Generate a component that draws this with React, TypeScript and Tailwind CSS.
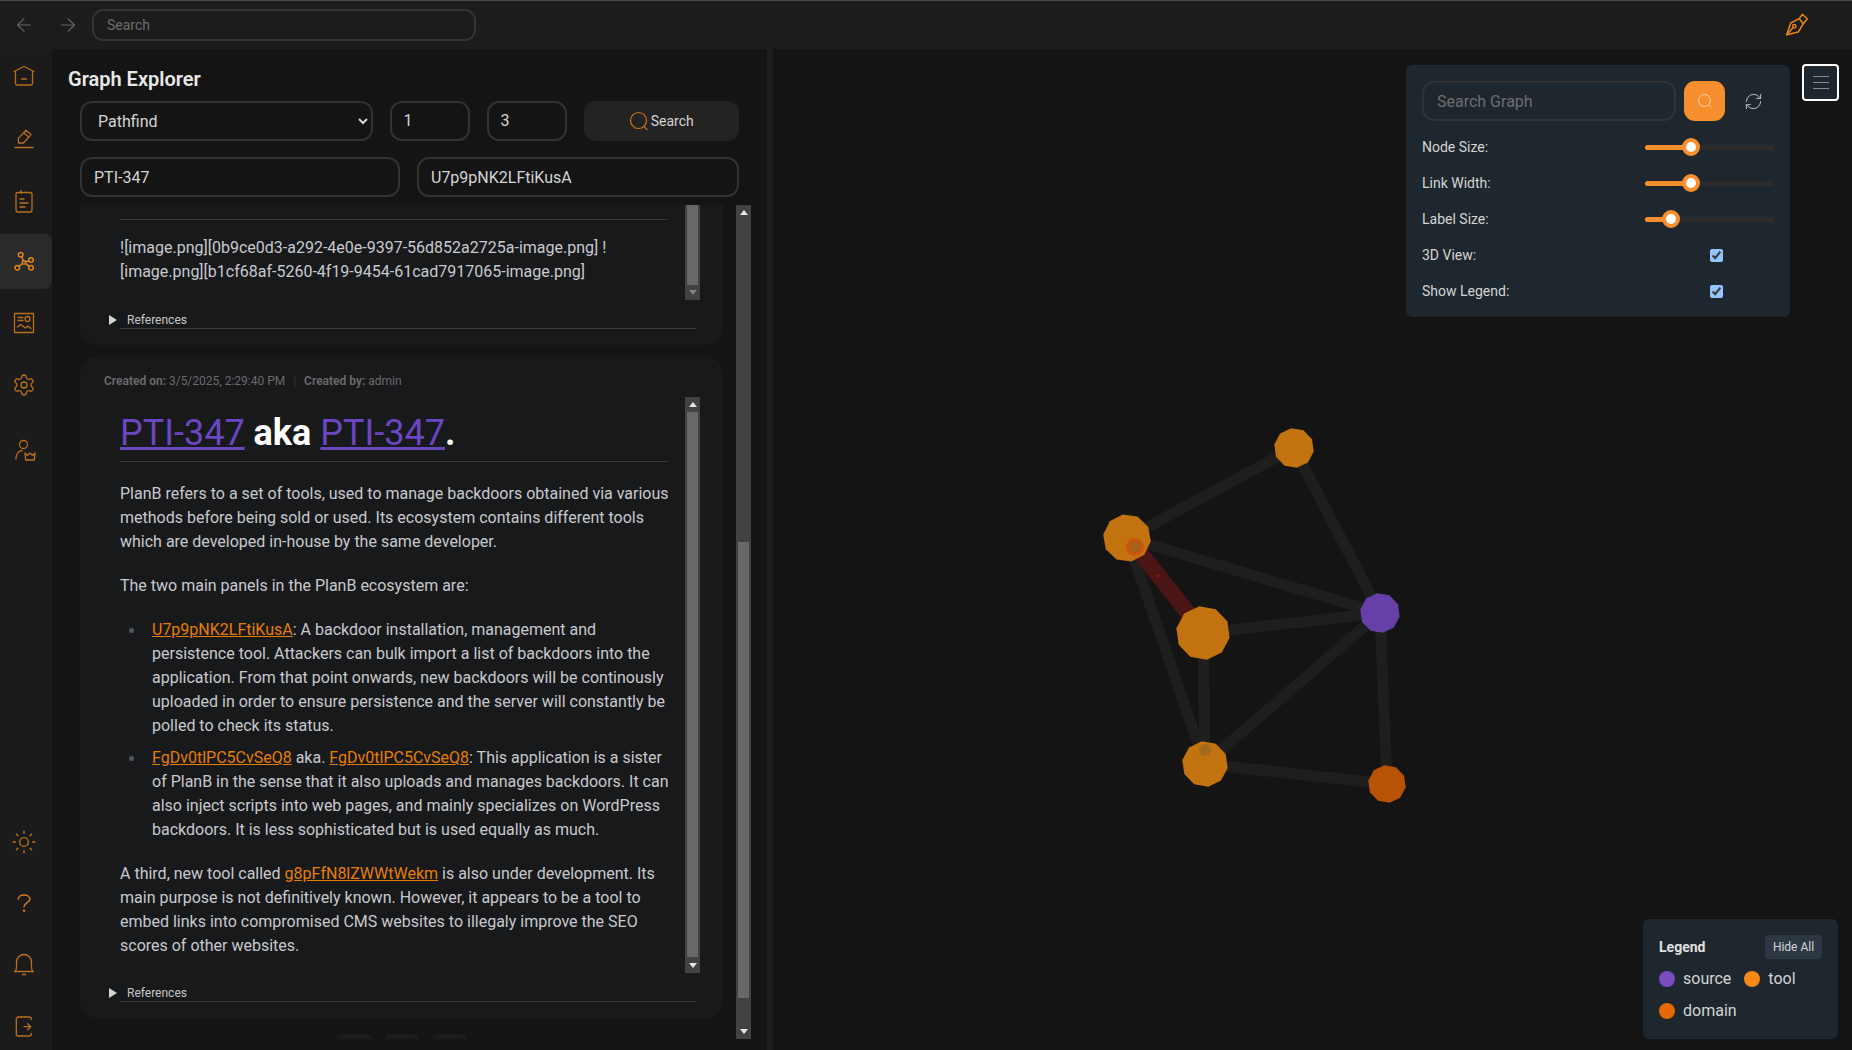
import React from "react";
import { ArrowLeft, ArrowRight, Settings, Sun, RefreshCw } from "lucide-react";

const ic = "#b96f1d";

function Svg({ children, size = 24, color = ic, sw = 1.3 }: { children: React.ReactNode; size?: number; color?: string; sw?: number }) {
  return (
    <svg width={size} height={size} viewBox="0 0 24 24" fill="none" stroke={color} strokeWidth={sw} strokeLinecap="round" strokeLinejoin="round">
      {children}
    </svg>
  );
}

function SideItem({ children, active, h = "h-[54.750px]", extra = "" }: { children: React.ReactNode; active?: boolean; h?: string; extra?: string }) {
  return (
    <div className={`w-[52px] ${h} ${extra} pr-[4px] flex items-center justify-center rounded-r-[8px] ${active ? "bg-[#2a2a2a]" : ""}`}>{children}</div>
  );
}

function Tri({ up }: { up?: boolean }) {
  return (
    <svg width="8" height="5" viewBox="0 0 8 5" fill="#e5e5e5">
      <path d={up ? "M4 0L8 5H0Z" : "M0 0H8L4 5Z"} />
    </svg>
  );
}

function Scrollbar({ top, thumb, hideUp, dimDown }: { top: number; thumb: number; hideUp?: boolean; dimDown?: boolean }) {
  return (
    <div className="w-[15px] shrink-0 bg-[#424242] flex flex-col items-center self-stretch">
      {hideUp ? null : (
        <div className="h-[15px] w-full flex items-center justify-center shrink-0">
          <Tri up />
        </div>
      )}
      <div className="w-[11px] bg-[#686868] shrink-0" style={{ marginTop: top, height: thumb }} />
      <div className="flex-1" />
      <div className={`h-[15px] w-full flex items-center justify-center shrink-0 ${dimDown ? "opacity-40" : ""}`}>
        <Tri />
      </div>
    </div>
  );
}

function References() {
  return (
    <div className="mt-[12px] relative h-[17px] border-b border-[#3a3a3a] ml-[16px] mr-[4px]">
      <div className="absolute left-[-11px] top-[3px] w-0 h-0 border-y-[5px] border-y-transparent border-l-[8px] border-l-[#d4d4d4]" />
      <span className="absolute left-[7px] top-0 text-[12px] leading-[16px] text-[#c8c8c8]">References</span>
    </div>
  );
}

function A({ children }: { children: React.ReactNode }) {
  return <a className="text-[#e67e00] underline">{children}</a>;
}

const nodes = [
  { x: 1294, y: 448, r: 20, c: "#c2730f", rot: 10 },
  { x: 1127, y: 538, r: 24, c: "#c2730f", rot: 8 },
  { x: 1203, y: 633, r: 27, c: "#c2730f", rot: 10 },
  { x: 1380, y: 613, r: 20, c: "#673fa8", rot: 10 },
  { x: 1205, y: 764, r: 23, c: "#c2730f", rot: 10 },
  { x: 1387, y: 784, r: 19, c: "#b85205", rot: 10 },
];
const links = [
  [0, 1],
  [0, 3],
  [1, 3],
  [2, 3],
  [1, 4],
  [2, 4],
  [3, 4],
  [3, 5],
  [4, 5],
];

function oct(x: number, y: number, r: number, rot: number) {
  const pts: string[] = [];
  for (let i = 0; i < 10; i++) {
    const a = ((i * 36 + rot) * Math.PI) / 180;
    pts.push(`${(x + r * Math.cos(a)).toFixed(1)},${(y + r * Math.sin(a)).toFixed(1)}`);
  }
  return pts.join(" ");
}

function Graph() {
  const ox = 773;
  const oy = 49;
  return (
    <svg className="absolute left-0 top-0" width="1079" height="1001" viewBox={`${ox} ${oy} 1079 1001`}>
      {links.map(([a, b], i) => (
        <line key={i} x1={nodes[a].x} y1={nodes[a].y} x2={nodes[b].x} y2={nodes[b].y} stroke="#1e1e1e" strokeWidth="11" />
      ))}
      <line x1={1135} y1={546} x2={1200} y2={628} stroke="#4c1515" strokeWidth="16" />
      {nodes.map((n, i) => (
        <polygon key={i} points={oct(n.x, n.y, n.r, n.rot)} fill={n.c} />
      ))}
      <circle cx={1135} cy={547} r={9} fill="#cf5410" />
      <circle cx={1135} cy={547} r={6} fill="#a8601a" />
      <circle cx={1205} cy={750} r={6} fill="#a56a20" />
      <circle cx={1158} cy={576} r={1} fill="#d01010" />
    </svg>
  );
}

function Slider({ label, pct }: { label: string; pct: number }) {
  return (
    <div className="h-[36px] flex items-center justify-between">
      <span className="text-[14px] text-[#d4d4d4]">{label}</span>
      <div className="relative w-[129px] h-[5px] bg-[#2c2c2c] rounded-full">
        <div className="absolute left-0 top-0 h-[5px] bg-[#f78f2e] rounded-l-full" style={{ width: `${pct}%` }} />
        <div
          className="absolute top-[-7px] w-[18px] h-[18px] -ml-[9px] rounded-full bg-white border-[4px] border-[#f78f2e]"
          style={{ left: `${pct}%` }}
        />
      </div>
    </div>
  );
}

function Check({ label }: { label: string }) {
  return (
    <div className="h-[36px] flex items-center">
      <span className="text-[14px] text-[#d4d4d4] w-[288px]">{label}</span>
      <input type="checkbox" defaultChecked className="w-[13px] h-[13px] [color-scheme:dark] accent-[#93c5fd]" />
    </div>
  );
}

function Dot({ c, label }: { c: string; label: string }) {
  return (
    <div className="flex items-center gap-[8px]">
      <span className="w-[16px] h-[16px] rounded-full" style={{ background: c }} />
      <span className="text-[16px] leading-[24px] text-[#d4d4d4]">{label}</span>
    </div>
  );
}

const inputCls = "bg-transparent border-2 border-[#323232] rounded-[12px] text-[#d4d4d4] text-[16px] outline-none";
const liCls =
  "relative before:content-[''] before:absolute before:left-[-23px] before:top-[10px] before:w-[5px] before:h-[5px] before:rounded-full before:bg-[#4b5563]";

export default function App() {
  return (
    <div className="w-[1852px] h-[1050px] overflow-hidden bg-[#141414] flex flex-col text-[#d4d4d4] font-['Roboto',sans-serif]">
      <header className="h-[49px] shrink-0 bg-[#1c1c1c] border-t border-[#4a4a4a] flex items-center">
        <div className="w-[92px] flex items-center pl-[13px] gap-[22px] shrink-0">
          <ArrowLeft size={22} color="#666666" strokeWidth={1.2} />
          <ArrowRight size={22} color="#666666" strokeWidth={1.2} />
        </div>
        <input
          placeholder="Search"
          className="w-[384px] h-[32px] px-[13px] bg-transparent border-2 border-[#333333] rounded-[11px] text-[14px] outline-none placeholder:text-[#6e6e6e]"
        />
        <div className="flex-1" />
        <div className="mr-[43px]">
          <Svg color="#e8851a" sw={1.5}>
            <path d="M1.700 21.700L5.700 10L14.300 5.700L18.300 10.700L13.300 19Z" />
            <path d="M14.300 5.700L17.300 1.300L22.300 5.700L18.300 10.700" />
            <circle cx="9.300" cy="13.300" r="1.700" />
            <path d="M1.700 21.700L8.100 14.500" />
          </Svg>
        </div>
      </header>
      <div className="flex-1 flex min-h-0">
        <aside className="w-[52px] shrink-0 bg-[#1b1b1b] flex flex-col">
          <div className="flex flex-col gap-[7px]">
            <SideItem>
              <Svg>
                <path d="M2 7.500L12 2.500L22 7.500" />
                <path d="M3.500 8v11a2 2 0 0 0 2 2h13a2 2 0 0 0 2-2V8" />
                <path d="M9.500 15h5" />
              </Svg>
            </SideItem>
            <SideItem>
              <Svg>
                <path d="M3 21.500h18" />
                <path d="M14 4.200l5 4.400-7.600 8.400H6.500l-.2-4.600z" />
                <path d="M11.700 6.700l5 4.400" />
              </Svg>
            </SideItem>
            <SideItem extra="pt-[2px]">
              <Svg>
                <rect x="4" y="3.500" width="16" height="19.500" rx="2" />
                <path d="M9 1.500v3" />
                <path d="M8 10h4M8 14h8M8 18h5" />
              </Svg>
            </SideItem>
            <SideItem active>
              <Svg color="#dd8420" sw={1.5}>
                <circle cx="8.700" cy="4.800" r="2.300" />
                <circle cx="19" cy="10" r="2.300" />
                <circle cx="19" cy="17.700" r="2.300" />
                <circle cx="5.300" cy="17.700" r="2.300" />
                <circle cx="12" cy="12.500" r="1.700" />
                <path d="M9.800 7l1.500 4M16.800 10.700l-3.300 1.200M17.200 16.300l-3.700-3M7 16.300l3.500-2.800" />
              </Svg>
            </SideItem>
            <SideItem>
              <Svg>
                <rect x="2.500" y="2.500" width="19" height="19" />
                <path d="M6 6.500h5M6 9.500h5" />
                <circle cx="15.500" cy="8" r="2.500" />
                <path d="M5.500 16l3-2.500 5 3.500 2.500-2 3 2.500" />
              </Svg>
            </SideItem>
            <SideItem>
              <Settings size={24} color={ic} strokeWidth={1.3} />
            </SideItem>
            <SideItem extra="pt-[6px]">
              <Svg>
                <circle cx="11.500" cy="6.500" r="4" />
                <path d="M4 21c0-4.500 2.500-8 6-8.500" />
                <path d="M13 15l2.500 2.500L18 15l2.500 2.500L23 15l-.7 7H13.700z" />
              </Svg>
            </SideItem>
          </div>
          <div className="flex-1" />
          <div className="flex flex-col gap-[14px]">
            <SideItem h="h-[48px]" extra="pt-[4px]">
              <Sun size={26} color={ic} strokeWidth={1.3} />
            </SideItem>
            <SideItem h="h-[48px]" extra="pt-[2px]">
              <Svg color="#d27d1f" sw={1.5}>
                <path d="M6.300 8C6.300 5.500 9 4 12 4s6 1.500 6 4.200c0 3.500-6 3.500-6 7.500" />
                <path d="M12 19.700h.01" strokeWidth="2.400" />
              </Svg>
            </SideItem>
            <SideItem h="h-[48px]">
              <Svg>
                <path d="M2.500 19.500h19c-1-.5-2-1.500-2-4V10a7.500 7.500 0 0 0-15 0v5.500c0 2.500-1 3.500-2 4z" />
                <path d="M10.500 22.500h3" />
              </Svg>
            </SideItem>
            <SideItem h="h-[48px]">
              <Svg>
                <path d="M19.300 5.500V5a2 2 0 0 0-2-2H6.300a2 2 0 0 0-2 2v15a2 2 0 0 0 2 2h11a2 2 0 0 0 2-2v-.5" />
                <path d="M12 12.700h6.700M15.700 9.700l3 3-3 3" />
              </Svg>
            </SideItem>
          </div>
        </aside>

        <section className="w-[715px] shrink-0 flex flex-col pt-[16px]">
          <h2 className="pl-[16px] text-[20px] leading-[28px] font-semibold text-[#e8e8e8]">Graph Explorer</h2>
          <div className="ml-[28px] mt-[8px] flex h-[40px] gap-[17px]">
            <select className={`${inputCls} w-[292.500px] pl-[12px] pr-[4px] bg-[#161616] [color-scheme:dark]`} defaultValue="Pathfind">
              <option>Pathfind</option>
            </select>
            <input defaultValue="1" className={`${inputCls} w-[80px] px-[12px]`} />
            <input defaultValue="3" className={`${inputCls} w-[80px] px-[12px]`} />
            <button className="w-[155.500px] rounded-[12px] bg-[#232323] flex items-center justify-center gap-[2px] text-[14px] text-[#d4d4d4]">
              <svg width="20" height="20" viewBox="0 0 20 20" fill="none" stroke="#c8741c" strokeWidth="1.200" strokeLinecap="round">
                <circle cx="9.500" cy="9.500" r="8" />
                <path d="M15 15.500l3 3" />
              </svg>
              Search
            </button>
          </div>
          <div className="ml-[28px] mt-[16px] flex h-[40px] gap-[17px]">
            <input defaultValue="PTI-347" className={`${inputCls} w-[320px] px-[12px] pt-[2px]`} />
            <input defaultValue="U7p9pNK2LFtiKusA" className={`${inputCls} w-[322px] px-[12px] pt-[2px]`} />
          </div>
          <div className="ml-[28px] mt-[8px] h-[834px] flex gap-[13px]">
            <div className="w-[643px] flex flex-col gap-[12px] overflow-hidden">
              <div className="h-[140px] shrink-0 bg-[#18191b] rounded-b-[16px] pl-[24px] pr-[23px]">
                <div className="h-[95px] flex">
                  <div className="flex-1 pl-[16px] pr-[14px] pt-[14px] overflow-hidden">
                    <div className="border-t border-[#3a3a3a] mr-[3px] pt-[16px] text-[16px] leading-[24px] text-[#c8c9ce]">
                      ![image.png][0b9ce0d3-a292-4e0e-9397-56d852a2725a-image.png] ![image.png][b1cf68af-5260-4f19-9454-61cad7917065-image.png]
                    </div>
                  </div>
                  <Scrollbar hideUp top={0} thumb={80} dimDown />
                </div>
                <References />
              </div>
              <div className="h-[661px] shrink-0 bg-[#18191b] rounded-[16px] pl-[24px] pr-[23px] pt-[16px]">
                <div className="text-[12px] leading-[16px] text-[#6b6b6b]">
                  <b className="font-semibold">Created on:</b> 3/5/2025, 2:29:40 PM <span className="mx-[5px] text-[#3a3a3a]">|</span>{" "}
                  <b className="font-semibold">Created by:</b> admin
                </div>
                <div className="mt-[8px] h-[576px] flex">
                  <div className="flex-1 pl-[16px] pr-[14px] pt-[16px] overflow-hidden text-[16px] leading-[24px] text-[#c8c9ce]">
                    <h1 className="text-[36px] leading-[40px] font-bold text-white pb-[8px] border-b border-[#3a3a3a] mr-[3px]">
                      <a className="font-normal text-[#6b46c1] underline">PTI-347</a> aka <a className="font-normal text-[#6b46c1] underline">PTI-347</a>.
                    </h1>
                    <p className="mt-[20px]">
                      PlanB refers to a set of tools, used to manage backdoors obtained via various methods before being sold or used. Its ecosystem contains different tools which are developed in-house by the same developer.
                    </p>
                    <p className="mt-[20px]">The two main panels in the PlanB ecosystem are:</p>
                    <ul className="mt-[20px] pl-[32px] flex flex-col gap-[8px]">
                      <li className={liCls}>
                        <A>U7p9pNK2LFtiKusA</A>: A backdoor installation, management and persistence tool. Attackers can bulk import a list of backdoors into the application. From that point onwards, new backdoors will be continously uploaded in order to ensure persistence and the server will constantly be polled to check its status.
                      </li>
                      <li className={liCls}>
                        <A>FgDv0tlPC5CvSeQ8</A> aka. <A>FgDv0tlPC5CvSeQ8</A>: This application is a sister of PlanB in the sense that it also uploads and manages backdoors. It can also inject scripts into web pages, and mainly specializes on WordPress backdoors. It is less sophisticated but is used equally as much.
                      </li>
                    </ul>
                    <p className="mt-[20px]">
                      A third, new tool called <A>g8pFfN8lZWWtWekm</A> is also under development. Its main purpose is not definitively known. However, it appears to be a tool to embed links into compromised CMS websites to illegaly improve the SEO scores of other websites.
                    </p>
                  </div>
                  <Scrollbar top={0} thumb={545} />
                </div>
                <References />
              </div>
              <div className="flex justify-center gap-[13px] mt-[4px]">
                <div className="w-[36px] h-[10px] rounded-full bg-[#1c1c1c]" />
                <div className="w-[34px] h-[10px] rounded-full bg-[#1c1c1c]" />
                <div className="w-[35px] h-[10px] rounded-full bg-[#1c1c1c]" />
              </div>
            </div>
            <Scrollbar top={322} thumb={456} />
          </div>
        </section>

        <div className="w-[6px] shrink-0 bg-[#1e1e1e]" />

        <main className="flex-1 relative overflow-hidden">
          <Graph />
          <div className="absolute left-[633px] top-[16px] w-[384px] h-[252px] bg-[#1e272e] rounded-[6px] px-[16px] pt-[16px]">
            <div className="flex items-center h-[40px] mb-[8px]">
              <input
                placeholder="Search Graph"
                className="w-[254px] h-[40px] px-[13px] bg-transparent border-2 border-[#323232] rounded-[12px] text-[16px] outline-none placeholder:text-[#6e6e6e]"
              />
              <button className="ml-[8px] w-[41px] h-[40px] rounded-[11px] bg-[#f78f2e] flex items-center justify-center">
                <svg width="16" height="16" viewBox="0 0 16 16" fill="none" stroke="#fbd3aa" strokeWidth="1" strokeLinecap="round">
                  <circle cx="7.500" cy="7.500" r="6" />
                  <path d="M12 12l2 2" />
                </svg>
              </button>
              <div className="ml-[19px]">
                <RefreshCw size={19} color="#c8c8c8" strokeWidth={1.2} />
              </div>
            </div>
            <Slider label="Node Size:" pct={36} />
            <Slider label="Link Width:" pct={36} />
            <Slider label="Label Size:" pct={20} />
            <Check label="3D View:" />
            <Check label="Show Legend:" />
          </div>
          <button className="absolute left-[1029px] top-[15px] w-[37px] h-[37px] rounded-[4px] bg-[#1e272e] border-2 border-white flex flex-col items-center justify-center gap-[5px]">
            <span className="w-[16px] h-px bg-[#8a8a8a]" />
            <span className="w-[16px] h-px bg-[#8a8a8a]" />
            <span className="w-[16px] h-px bg-[#8a8a8a]" />
          </button>
          <div className="absolute left-[870px] top-[870px] w-[195px] h-[120px] bg-[#1e272e] rounded-[6px] px-[16px] pt-[16px]">
            <div className="flex items-center justify-between h-[24px]">
              <span className="text-[14px] font-bold text-[#e0e0e0]">Legend</span>
              <span className="w-[57px] h-[24px] rounded-[4px] bg-[#2d3844] text-[12px] leading-[24px] text-center text-[#d4d4d4]">Hide All</span>
            </div>
            <div className="mt-[8px] flex flex-wrap gap-x-[13px] gap-y-[8px]">
              <Dot c="#7b4bc0" label="source" />
              <Dot c="#f78a12" label="tool" />
              <Dot c="#e66a00" label="domain" />
            </div>
          </div>
        </main>
      </div>
    </div>
  );
}
